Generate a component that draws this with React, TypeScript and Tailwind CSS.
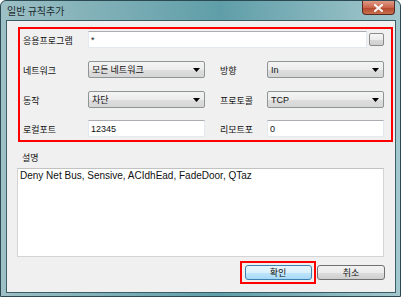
import React from "react";

const ko = { fontFamily: '"Noto Sans CJK KR", "Noto Sans", sans-serif' };
const lat = { fontFamily: '"Liberation Sans", Arial, "Noto Sans CJK KR", sans-serif' };

function Arrow() {
  return (
    <svg width="7" height="4" viewBox="0 0 7 4" className="block">
      <path d="M0 0 H7 L3.5 4 Z" fill="#000" />
    </svg>
  );
}

function Select({ text, latin }: { text: string; latin?: boolean }) {
  return (
    <div className="w-[117px] h-[17px] flex items-center justify-between pl-[3px] pr-[4px] rounded-[2px] border border-[#8f9494] bg-[linear-gradient(180deg,#f4f4f4_0%,#ececec_50%,#dedede_51%,#d6d6d6_100%)]">
      <div
        className="text-[9px] leading-[12px] text-[#111] whitespace-nowrap"
        style={latin ? lat : ko}
      >
        {text}
      </div>
      <Arrow />
    </div>
  );
}

function Input({ text, w }: { text: string; w: string }) {
  return (
    <div
      className={`${w} h-[17px] flex items-center pl-[2px] bg-white border border-[#e3e9ef] border-t-[#abadb3]`}
    >
      <div className="text-[9px] leading-[12px] text-[#111]" style={lat}>
        {text}
      </div>
    </div>
  );
}

function Label({ text, w, pl }: { text: string; w: string; pl: string }) {
  return (
    <div
      className={`${w} ${pl} pt-[2px] shrink-0 text-[9px] leading-[12px] text-[#111] whitespace-nowrap`}
      style={ko}
    >
      {text}
    </div>
  );
}

export default function App() {
  return (
    <div className="w-[401px] h-[297px] flex flex-col overflow-hidden rounded-t-[6px] border border-[#2c4a52] bg-[linear-gradient(90deg,#9cc0c5_0%,#86b3ba_20%,#5f9ea8_55%,#7db0b8_75%,#a3c8cd_100%)]">
      {/* Title bar */}
      <div className="h-[19px] flex items-start justify-between shrink-0">
        <div
          className="pl-[6px] pt-[4px] text-[10px] leading-[12px] text-[#1c2a2e]"
          style={ko}
        >
          일반 규칙추가
        </div>
        <div className="mr-[5px] w-[33px] h-[14px] rounded-b-[4px] border border-t-0 border-[#5a2a22] bg-[linear-gradient(180deg,#e09a86_0%,#c9654c_50%,#b2452c_51%,#c8714f_100%)] flex items-center justify-center">
          <svg width="9" height="8" viewBox="0 0 9 8">
            <path d="M1 1 L8 7 M8 1 L1 7" stroke="#fff" strokeWidth="2" strokeLinecap="square" />
            <path d="M1 1 L8 7 M8 1 L1 7" stroke="#f4ece8" strokeWidth="1" />
          </svg>
        </div>
      </div>

      {/* Client area */}
      <div className="flex-1 ml-[5px] mr-[4px] mb-[3px] border border-[#3b5e66] bg-[#f0f0f0] pt-[6px] pl-[11px] pr-[2px] flex flex-col">
        {/* Red highlighted box */}
        <div className="w-[375px] border-2 border-[#ff0000] pt-[2px] pb-[3px] flex flex-col">
          <div className="h-[17px] flex items-center">
            <Label text="응용프로그램" w="w-[68px]" pl="pl-[3px]" />
            <Input text="*" w="w-[279px]" />
            <div className="ml-[2px] w-[15px] h-[13px] rounded-[2px] border border-[#8a8a8a] bg-[linear-gradient(180deg,#f6f6f6_0%,#ebebeb_50%,#dadada_51%,#cfcfcf_100%)]" />
          </div>
          <div className="h-[17px] mt-[13px] flex items-center">
            <Label text="네트워크" w="w-[68px]" pl="pl-[3px]" />
            <Select text="모든 네트워크" />
            <Label text="방향" w="w-[62px]" pl="pl-[15px]" />
            <Select text="In" latin />
          </div>
          <div className="h-[17px] mt-[13px] flex items-center">
            <Label text="동작" w="w-[68px]" pl="pl-[3px]" />
            <Select text="차단" />
            <Label text="프로토콜" w="w-[62px]" pl="pl-[15px]" />
            <Select text="TCP" latin />
          </div>
          <div className="h-[17px] mt-[12px] flex items-center">
            <Label text="로컬포트" w="w-[68px]" pl="pl-[3px]" />
            <Input text="12345" w="w-[117px]" />
            <Label text="리모트포" w="w-[62px]" pl="pl-[15px]" />
            <Input text="0" w="w-[117px]" />
          </div>
        </div>

        {/* Description */}
        <div
          className="h-[26px] pl-[4px] pt-[10px] text-[9px] leading-[12px] text-[#111]"
          style={ko}
        >
          설명
        </div>
        <div
          className="-ml-[1px] w-[367px] h-[89px] bg-white border border-[#d4d4d4] border-t-[#c2c2c2] pl-[2px] pt-[1px] text-[10px] leading-[12px] text-[#111]"
          style={lat}
        >
          Deny Net Bus, Sensive, ACIdhEad, FadeDoor, QTaz
        </div>

        {/* Buttons */}
        <div className="mt-[4px] flex justify-end items-center pr-[8px]">
          <div className="w-[76px] h-[23px] border-2 border-[#ff0000] flex items-center justify-center">
            <div
              className="w-[67px] h-[15px] rounded-[3px] border border-[#3c7fb1] bg-[linear-gradient(180deg,#eaf6fd_0%,#d9f0fc_50%,#bee6fd_51%,#a7d9f5_100%)] flex items-center justify-center text-[9px] leading-[12px] text-[#111]"
              style={ko}
            >
              확인
            </div>
          </div>
          <div
            className="ml-[1px] w-[68px] h-[15px] rounded-[3px] border border-[#707070] bg-[linear-gradient(180deg,#f2f2f2_0%,#ebebeb_50%,#dddddd_51%,#cfcfcf_100%)] flex items-center justify-center text-[9px] leading-[12px] text-[#111]"
            style={ko}
          >
            취소
          </div>
        </div>
      </div>
    </div>
  );
}
